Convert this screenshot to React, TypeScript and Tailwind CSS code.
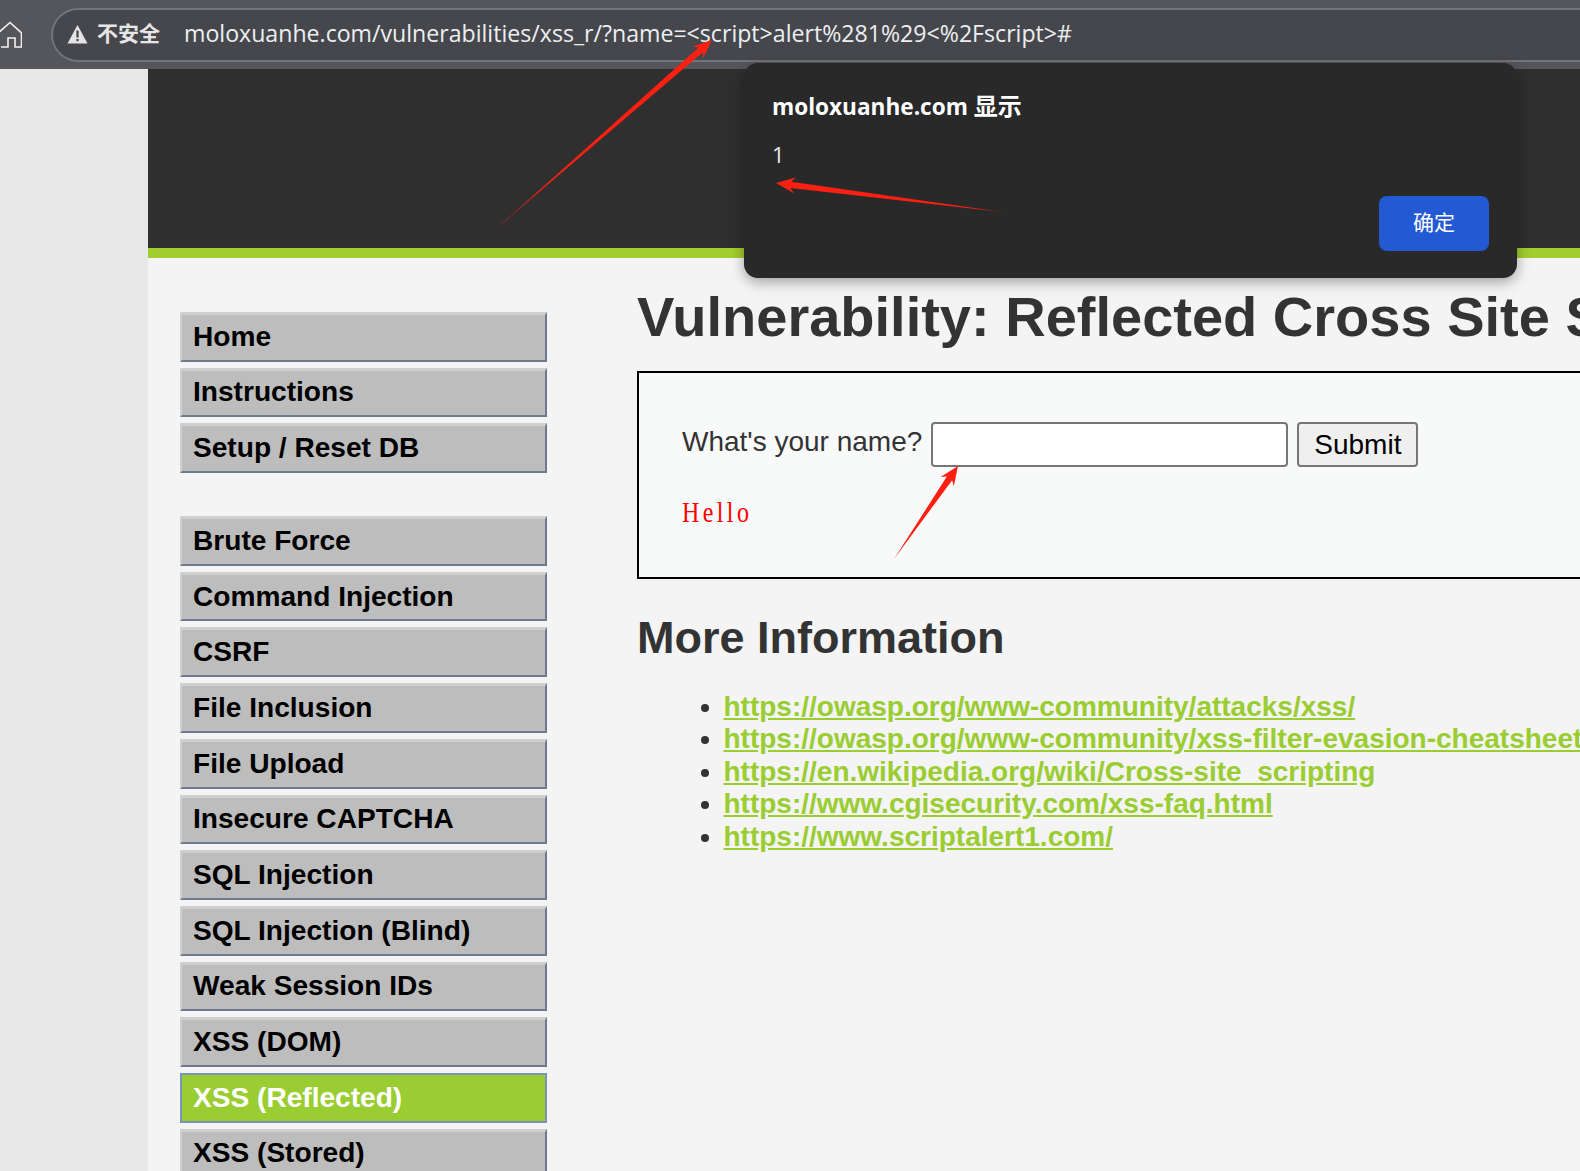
const topLinks = ['Home', 'Instructions', 'Setup / Reset DB'];

const vulnLinks = [
  'Brute Force',
  'Command Injection',
  'CSRF',
  'File Inclusion',
  'File Upload',
  'Insecure CAPTCHA',
  'SQL Injection',
  'SQL Injection (Blind)',
  'Weak Session IDs',
  'XSS (DOM)',
  'XSS (Reflected)',
  'XSS (Stored)',
];

const infoLinks = [
  'https://owasp.org/www-community/attacks/xss/',
  'https://owasp.org/www-community/xss-filter-evasion-cheatsheet',
  'https://en.wikipedia.org/wiki/Cross-site_scripting',
  'https://www.cgisecurity.com/xss-faq.html',
  'https://www.scriptalert1.com/',
];

function MenuItem({ label, active }: { label: string; active?: boolean }) {
  if (active) {
    return (
      <div className="flex h-[49.7px] shrink-0 items-center border-2 border-[#7a93b8] bg-[#9acd32] pl-[11px] text-[28.1px] font-bold text-white">
        {label}
      </div>
    );
  }
  return (
    <div className="flex h-[49.7px] shrink-0 items-center border-t-[3px] border-r-2 border-b-2 border-l-2 border-t-[#cfcfcf] border-r-[#6d7b8d] border-b-[#6d7b8d] border-l-[#cfcfcf] bg-[#bdbdbd] pb-[1px] pl-[11px] text-[28.1px] font-bold text-black">
      {label}
    </div>
  );
}

function Arrow({ tip, tail }: { tip: [number, number]; tail: [number, number] }) {
  const dx = tail[0] - tip[0];
  const dy = tail[1] - tip[1];
  const len = Math.hypot(dx, dy);
  const ux = dx / len;
  const uy = dy / len;
  const at = (along: number, side: number) =>
    `${tip[0] + ux * along - uy * side},${tip[1] + uy * along + ux * side}`;
  const points = [at(0, 0), at(19, 8), at(15, 3.2), `${tail[0]},${tail[1]}`, at(15, -3.2), at(19, -8)].join(' ');
  return <polygon points={points} fill="#fb2012" />;
}

export default function App() {
  return (
    <div className="relative flex h-[1171px] w-[1580px] flex-col overflow-hidden bg-[#e8e8e8] font-['Liberation_Sans',Arial,sans-serif]">
      {/* browser toolbar */}
      <div className="flex h-[69px] shrink-0 items-center bg-[#55565b]">
        <svg width="22" height="28" viewBox="0 0 22 28" fill="none" stroke="#f2f2f2" strokeWidth="1.6" className="mr-[29px] shrink-0">
          <path d="M-3 13 L10 1.5 L21.5 12 V26 H15 V17 H8 V26 H1" />
        </svg>
        <div className="flex h-[54px] grow items-center rounded-l-[27px] border-2 border-r-0 border-[#737478] bg-[#46474c] pl-[14px]">
          <svg width="21" height="20" viewBox="0 0 21 20" className="-mt-[2px] shrink-0">
            <path d="M10.5 1 L20.5 19.5 H0.5 Z" fill="#e4e4e4" />
            <rect x="9.4" y="6.5" width="2.2" height="7" fill="#46474c" />
            <rect x="9.4" y="15" width="2.2" height="2.2" fill="#46474c" />
          </svg>
          <span className="-mt-[3px] ml-[9px] font-['Noto_Sans_CJK_SC',sans-serif] text-[21px] font-bold text-[#e6e6e6]">不安全</span>
          <span className="-mt-[2px] ml-[24px] whitespace-nowrap font-['Open_Sans',sans-serif] text-[23.14px] text-[#eceff1]">
            moloxuanhe.com/vulnerabilities/xss_r/?name=&lt;script&gt;alert%281%29&lt;%2Fscript&gt;#
          </span>
        </div>
      </div>

      <div className="flex grow pl-[148px]">
        <div className="flex grow flex-col bg-[#f4f4f4]">
          <div className="h-[179px] shrink-0 bg-[#2f2f2f]" />
          <div className="h-[10px] shrink-0 bg-[#a2cd2e]" />

          <div className="flex grow">
            {/* side menu */}
            <div className="ml-[32px] mt-[54px] flex w-[367px] shrink-0 flex-col">
              <div className="flex flex-col gap-[6px]">
                {topLinks.map((l) => (
                  <MenuItem key={l} label={l} />
                ))}
              </div>
              <div className="mt-[43px] flex flex-col gap-[6px]">
                {vulnLinks.map((l) => (
                  <MenuItem key={l} label={l} active={l === 'XSS (Reflected)'} />
                ))}
              </div>
            </div>

            {/* main column */}
            <div className="ml-[90px] min-w-0 grow">
              <h1 className="mt-[29px] h-[60px] whitespace-nowrap text-[56px] leading-[60px] font-bold text-[#333333]">
                Vulnerability: Reflected Cross Site Scripting (XSS)
              </h1>
              <div className="mt-[24px] h-[208px] border-2 border-r-0 border-black bg-[#f8f9f9] pl-[43px]">
                <div className="mt-[49px] flex items-center">
                  <span className="relative -top-[3px] text-[28px] leading-[45px] text-[#333333]">What's your name?</span>
                  <div className="ml-[9px] h-[45px] w-[357px] rounded-[4px] border-2 border-[#767676] bg-white" />
                  <div className="ml-[9px] flex h-[45px] w-[121px] items-center justify-center rounded-[4px] border-2 border-[#767676] bg-[#efefef] text-[28px] text-black">
                    Submit
                  </div>
                </div>
                <p className="mt-[30px] origin-left scale-y-[1.25] font-['Liberation_Serif',serif] text-[24px] leading-[30px] tracking-[3.4px] text-[#ff0000]">Hello</p>
              </div>
              <h2 className="mt-[31px] text-[45px] leading-[55px] font-bold text-[#333333]">More Information</h2>
              <ul className="mt-[26px] ml-[86.5px] list-disc">
                {infoLinks.map((l) => (
                  <li key={l} className="h-[32.4px] whitespace-nowrap text-[28px] leading-[32.4px] font-bold text-[#333333]">
                    <span className="text-[#9acd32] underline">{l}</span>
                  </li>
                ))}
              </ul>
            </div>
          </div>
        </div>
      </div>

      {/* alert dialog */}
      <div className="absolute left-[744px] top-[63px] flex h-[215px] w-[773px] flex-col rounded-[14px] bg-[#292929] pl-[28px] pr-[28px] shadow-[0_4px_14px_rgba(0,0,0,0.35)]">
        <div className="mt-[28px] font-['Open_Sans','Noto_Sans_CJK_SC',sans-serif] text-[22.6px] leading-[30px] font-bold text-white">
          moloxuanhe.com <span className="text-[24px]">显示</span>
        </div>
        <div className="mt-[17px] font-['Open_Sans',sans-serif] text-[22px] leading-[30px] text-[#eeeeee]">1</div>
        <div className="mt-[27px] flex justify-end">
          <div className="flex h-[55px] w-[110px] items-center justify-center rounded-[8px] bg-[#2359d3] pb-[3px] font-['Noto_Sans_CJK_SC',sans-serif] text-[21px] text-white">
            确定
          </div>
        </div>
      </div>

      {/* red annotation arrows */}
      <svg className="pointer-events-none absolute left-0 top-0" width="1580" height="1171">
        <Arrow tip={[712, 40]} tail={[497, 228]} />
        <Arrow tip={[776, 183]} tail={[1002, 212]} />
        <Arrow tip={[958, 466]} tail={[894, 559]} />
      </svg>
    </div>
  );
}
